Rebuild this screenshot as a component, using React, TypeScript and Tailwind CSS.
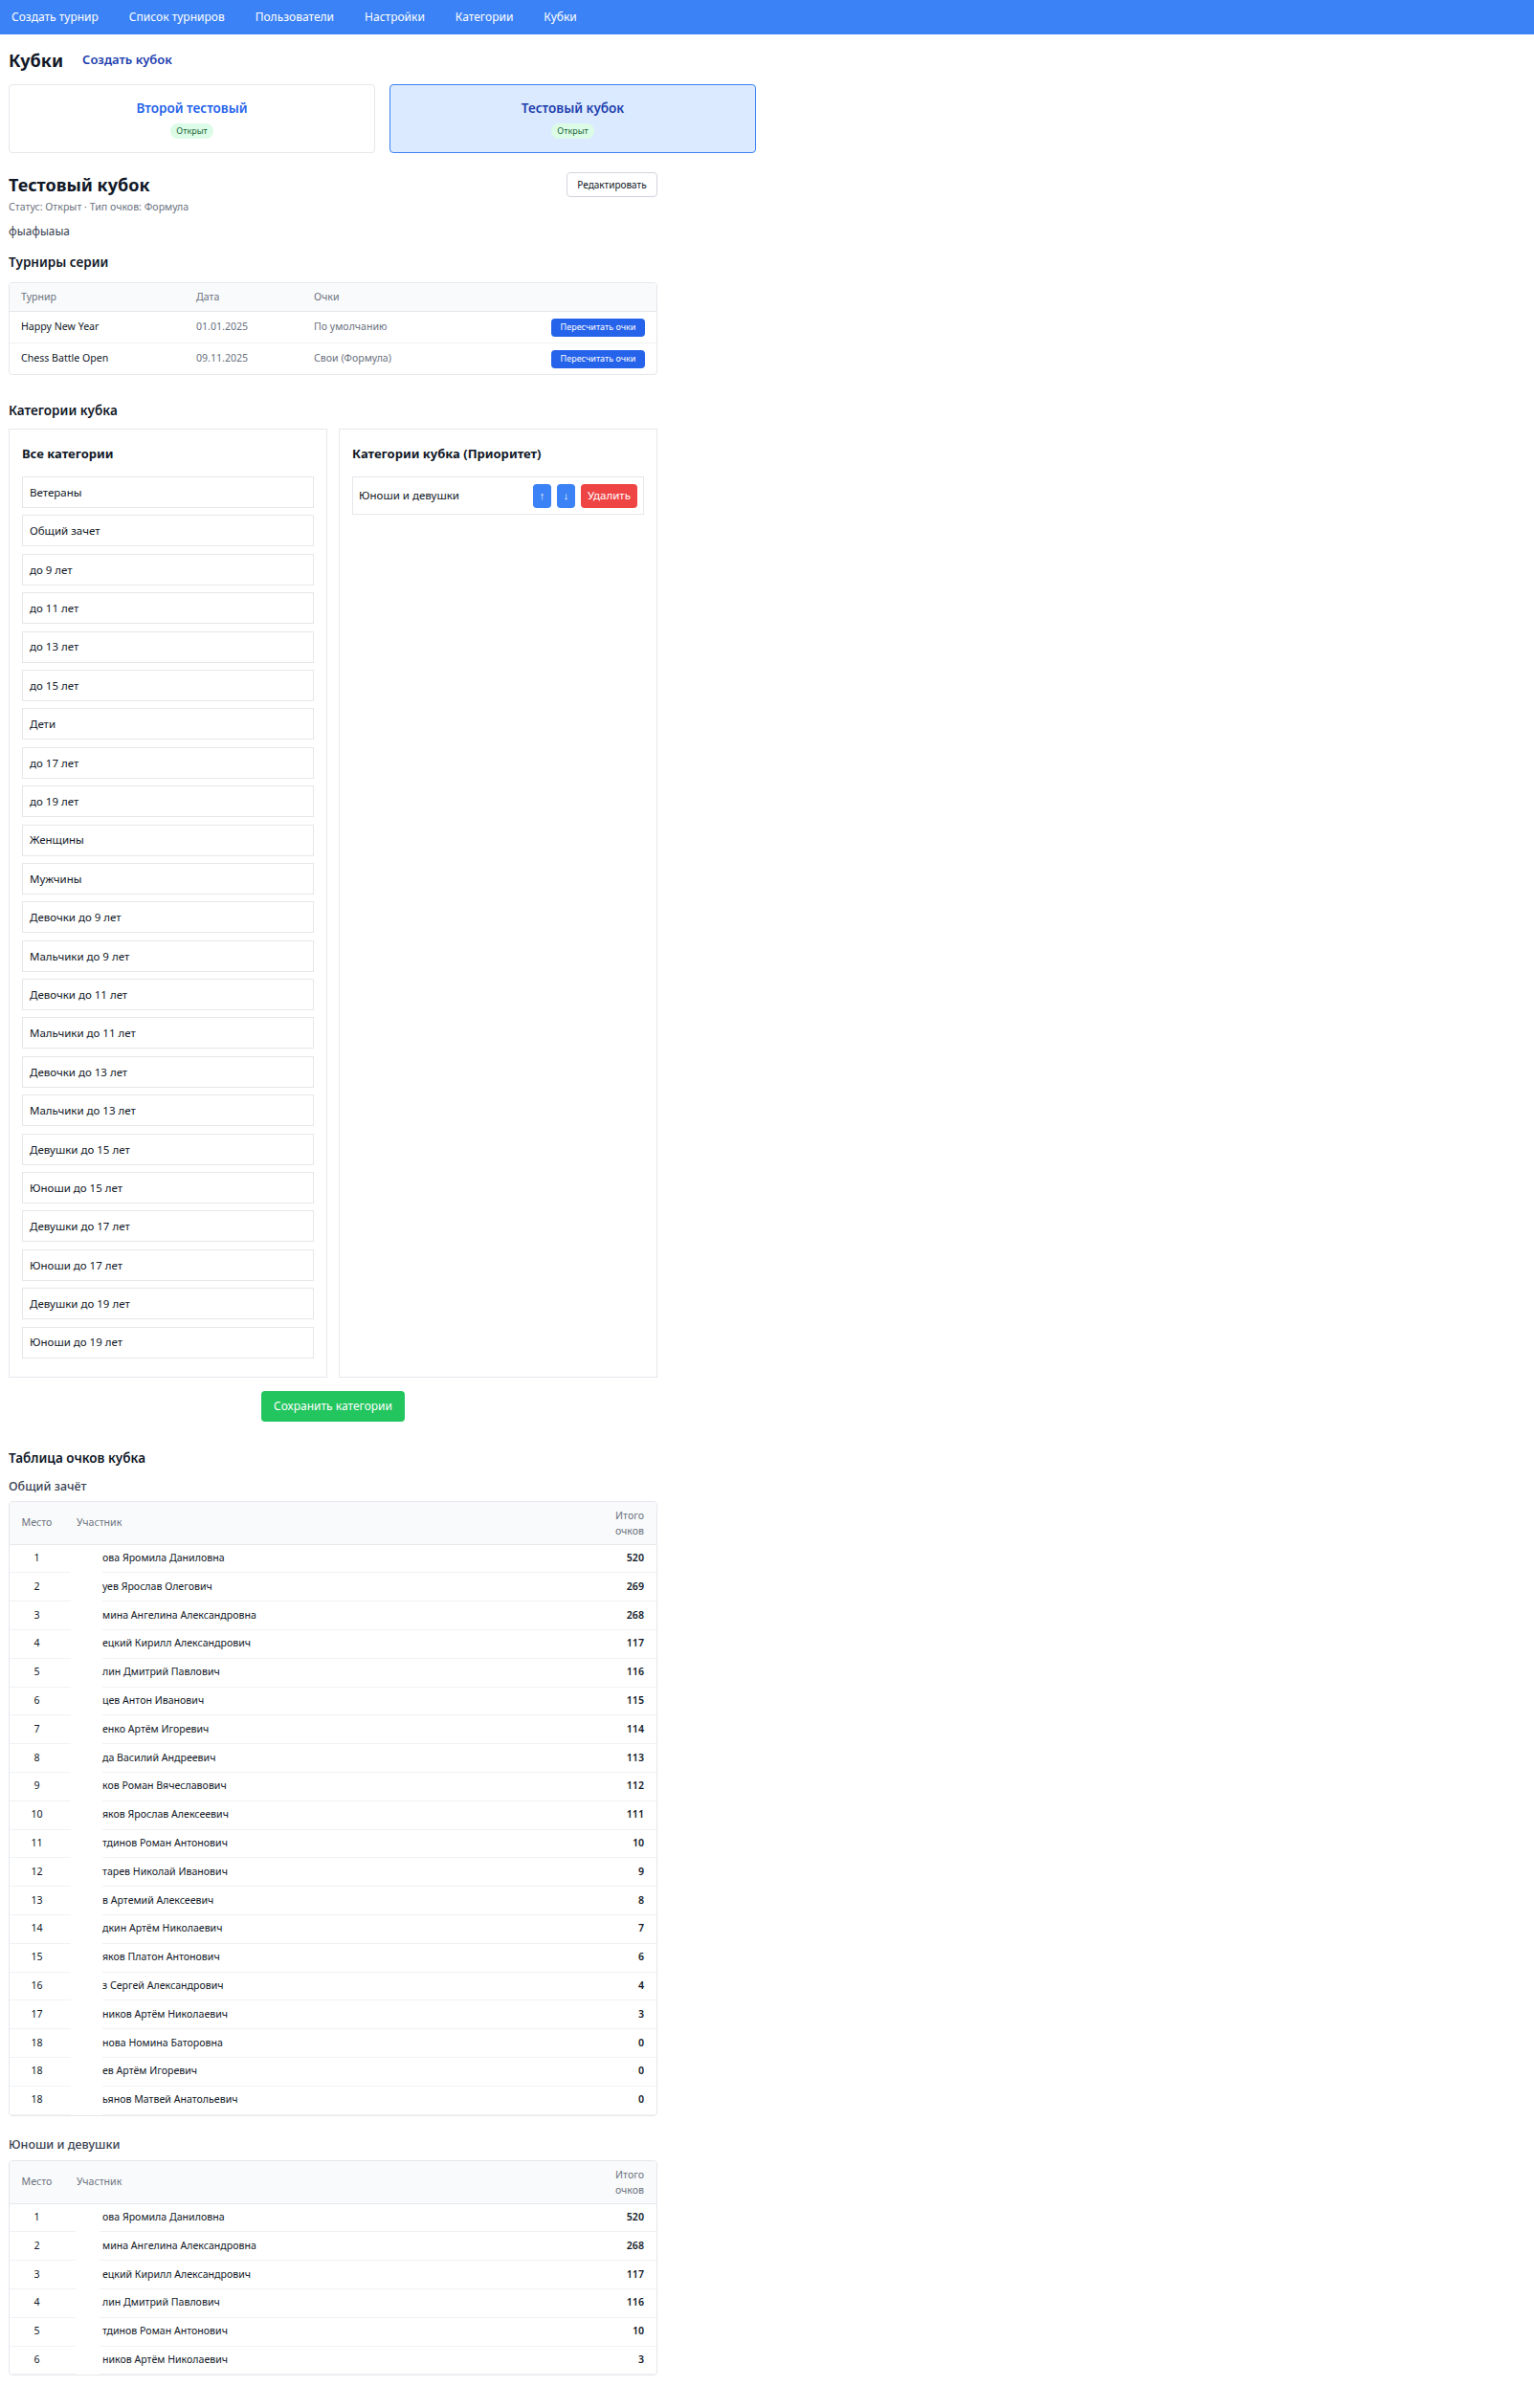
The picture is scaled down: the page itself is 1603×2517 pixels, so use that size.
import React from "react";

type Row = { place: number; name: string; points: number };

const navItems = ["Создать турнир", "Список турниров", "Пользователи", "Настройки", "Категории", "Кубки"];

const allCategories = [
  "Ветераны",
  "Общий зачет",
  "до 9 лет",
  "до 11 лет",
  "до 13 лет",
  "до 15 лет",
  "Дети",
  "до 17 лет",
  "до 19 лет",
  "Женщины",
  "Мужчины",
  "Девочки до 9 лет",
  "Мальчики до 9 лет",
  "Девочки до 11 лет",
  "Мальчики до 11 лет",
  "Девочки до 13 лет",
  "Мальчики до 13 лет",
  "Девушки до 15 лет",
  "Юноши до 15 лет",
  "Девушки до 17 лет",
  "Юноши до 17 лет",
  "Девушки до 19 лет",
  "Юноши до 19 лет",
];

const tournaments = [
  { name: "Happy New Year", date: "01.01.2025", points: "По умолчанию" },
  { name: "Chess Battle Open", date: "09.11.2025", points: "Свои (Формула)" },
];

const overall: Row[] = [
  { place: 1, name: "ова Яромила Даниловна", points: 520 },
  { place: 2, name: "уев Ярослав Олегович", points: 269 },
  { place: 3, name: "мина Ангелина Александровна", points: 268 },
  { place: 4, name: "ецкий Кирилл Александрович", points: 117 },
  { place: 5, name: "лин Дмитрий Павлович", points: 116 },
  { place: 6, name: "цев Антон Иванович", points: 115 },
  { place: 7, name: "енко Артём Игоревич", points: 114 },
  { place: 8, name: "да Василий Андреевич", points: 113 },
  { place: 9, name: "ков Роман Вячеславович", points: 112 },
  { place: 10, name: "яков Ярослав Алексеевич", points: 111 },
  { place: 11, name: "тдинов Роман Антонович", points: 10 },
  { place: 12, name: "тарев Николай Иванович", points: 9 },
  { place: 13, name: "в Артемий Алексеевич", points: 8 },
  { place: 14, name: "дкин Артём Николаевич", points: 7 },
  { place: 15, name: "яков Платон Антонович", points: 6 },
  { place: 16, name: "з Сергей Александрович", points: 4 },
  { place: 17, name: "ников Артём Николаевич", points: 3 },
  { place: 18, name: "нова Номина Баторовна", points: 0 },
  { place: 18, name: "ев Артём Игоревич", points: 0 },
  { place: 18, name: "ьянов Матвей Анатольевич", points: 0 },
];

const youth: Row[] = [
  { place: 1, name: "ова Яромила Даниловна", points: 520 },
  { place: 2, name: "мина Ангелина Александровна", points: 268 },
  { place: 3, name: "ецкий Кирилл Александрович", points: 117 },
  { place: 4, name: "лин Дмитрий Павлович", points: 116 },
  { place: 5, name: "тдинов Роман Антонович", points: 10 },
  { place: 6, name: "ников Артём Николаевич", points: 3 },
];

function PointsTable({ rows, narrow }: { rows: Row[]; narrow?: boolean }) {
  return (
    <div className="overflow-hidden rounded border border-[#e5e7eb] text-[10.6px]">
      <div className="flex h-[45px] items-center border-b border-[#e5e7eb] bg-[#f9fafb] text-[#6b7280]">
        <div className="w-[64px] pr-[7px] text-center">Место</div>
        <div className="flex-1 pl-[6px]">Участник</div>
        <div className="pr-[13px] text-right leading-4">
          Итого
          <br />
          очков
        </div>
      </div>
      {rows.map((row, i) => (
        <div key={i} className="flex h-[29.8px] text-[#111827]">
          <div
            className={
              narrow
                ? "flex w-[69px] shrink-0 items-center justify-center border-b border-[#f1f2f4] pr-[12px]"
                : "flex w-[64px] shrink-0 items-center justify-center border-b border-[#f1f2f4] pr-[7px]"
            }
          >
            {row.place}
          </div>
          <div className={narrow ? "w-[25px] shrink-0 bg-white" : "w-[33px] shrink-0 bg-white"} />
          <div
            className={
              narrow
                ? "flex flex-1 items-center border-b border-[#f1f2f4] pl-[3px]"
                : "flex flex-1 items-center border-b border-[#f1f2f4]"
            }
          >
            {row.name}
          </div>
          <div className="flex items-center border-b border-[#f1f2f4] pr-[13px] font-semibold">{row.points}</div>
        </div>
      ))}
    </div>
  );
}

export default function App() {
  return (
    <div className="min-h-[2517px] bg-white font-['Noto_Sans',sans-serif] text-[#111827]">
      <nav className="flex h-9 items-center gap-8 bg-[#3b82f6] pl-3 text-[12px] text-white">
        {navItems.map((item) => (
          <span key={item}>{item}</span>
        ))}
      </nav>

      <div className="px-[9px] pb-[35px]">
        <div className="mt-[13px] flex h-7 items-center gap-5">
          <h1 className="text-lg font-bold">Кубки</h1>
          <span className="text-[13px] font-semibold text-[#1e40af]">Создать кубок</span>
        </div>

        <div className="mt-[11px] grid grid-cols-[383px_383px] gap-[15px]">
          <div className="flex flex-col items-center rounded border border-[#e5e7eb] bg-white py-[14px]">
            <div className="text-[13.5px] leading-5 font-semibold text-[#2563eb]">Второй тестовый</div>
            <span className="mt-[6px] flex h-4 items-center rounded-full bg-[#dcfce7] px-1.5 text-[9px] text-[#166534]">Открыт</span>
          </div>
          <div className="flex flex-col items-center rounded border border-[#3b82f6] bg-[#dbeafe] py-[14px]">
            <div className="text-[13.5px] leading-5 font-semibold text-[#1e40af]">Тестовый кубок</div>
            <span className="mt-[6px] flex h-4 items-center rounded-full bg-[#dcfce7] px-1.5 text-[9px] text-[#166534]">Открыт</span>
          </div>
        </div>

        <div className="w-[678px]">
          <div className="mt-[19px] flex items-start justify-between">
            <h2 className="text-lg leading-7 font-bold">Тестовый кубок</h2>
            <button className="mt-px h-[26px] w-[95px] rounded border border-[#d1d5db] bg-white text-[10px]">Редактировать</button>
          </div>
          <div className="mt-[2px] text-[10.6px] leading-[14px] text-[#6b7280]">Статус: Открыт · Тип очков: Формула</div>
          <div className="mt-[10px] text-[11.8px] leading-4 text-[#374151]">фыафыаыа</div>

          <h3 className="mt-[15px] text-[13.5px] leading-5 font-semibold">Турниры серии</h3>
          <div className="mt-[11px] overflow-hidden rounded border border-[#e5e7eb] text-[10.6px]">
            <div className="grid h-[30px] grid-cols-[183px_123px_1fr_auto] items-center border-b border-[#e5e7eb] bg-[#f9fafb] text-[#6b7280]">
              <div className="px-3">Турнир</div>
              <div className="px-3">Дата</div>
              <div className="px-3">Очки</div>
              <div />
            </div>
            {tournaments.map((t, i) => (
              <div
                key={t.name}
                className={
                  i === 0
                    ? "grid h-[33px] grid-cols-[183px_123px_1fr_auto] items-center border-b border-[#f1f2f4]"
                    : "grid h-[32px] grid-cols-[183px_123px_1fr_auto] items-center"
                }
              >
                <div className="px-3 text-[#111827]">{t.name}</div>
                <div className="px-3 text-[#6b7280]">{t.date}</div>
                <div className="px-3 text-[#6b7280]">{t.points}</div>
                <div className="pr-3">
                  <button className="h-[19px] w-[98px] rounded bg-[#2563eb] text-[9px] text-white">Пересчитать очки</button>
                </div>
              </div>
            ))}
          </div>

          <h3 className="mt-[27px] text-[13.5px] leading-5 font-semibold">Категории кубка</h3>
          <div className="mt-[9px] grid grid-cols-2 gap-3">
            <div className="border border-[#e5e7eb] px-[13px] pt-[14px] pb-[19px]">
              <div className="text-[13px] leading-[22px] font-bold">Все категории</div>
              <div className="mt-[13px] flex flex-col gap-[7.4px]">
                {allCategories.map((c) => (
                  <div key={c} className="flex h-[33px] items-center border border-[#e5e7eb] px-[7px] text-[11.5px]">
                    {c}
                  </div>
                ))}
              </div>
            </div>
            <div className="border border-[#e5e7eb] px-[13px] pt-[14px]">
              <div className="text-[13px] leading-[22px] font-bold">Категории кубка (Приоритет)</div>
              <div className="mt-[13px] flex h-[40px] items-center justify-between border border-[#e5e7eb] pr-[6px] pl-[6px] text-[11.5px]">
                <span>Юноши и девушки</span>
                <div className="flex items-center gap-[6px]">
                  <button className="h-[25px] w-[19px] rounded bg-[#3b82f6] text-[11px] text-white">↑</button>
                  <button className="h-[25px] w-[19px] rounded bg-[#3b82f6] text-[11px] text-white">↓</button>
                  <button className="h-[25px] w-[59px] rounded bg-[#ef4444] text-[11.5px] text-white">Удалить</button>
                </div>
              </div>
            </div>
          </div>

          <div className="mt-[14px] flex justify-center">
            <button className="h-8 w-[150px] rounded bg-[#22c55e] text-[12px] text-white">Сохранить категории</button>
          </div>

          <h3 className="mt-[28px] text-[13.5px] leading-5 font-semibold">Таблица очков кубка</h3>
          <div className="mt-[10px] text-[12.5px] leading-5 font-medium text-[#374151]">Общий зачёт</div>
          <div className="mt-[5px]">
            <PointsTable rows={overall} />
          </div>

          <div className="mt-[20px] text-[12.5px] leading-5 font-medium text-[#374151]">Юноши и девушки</div>
          <div className="mt-[6px]">
            <PointsTable rows={youth} narrow />
          </div>
        </div>
      </div>
    </div>
  );
}
